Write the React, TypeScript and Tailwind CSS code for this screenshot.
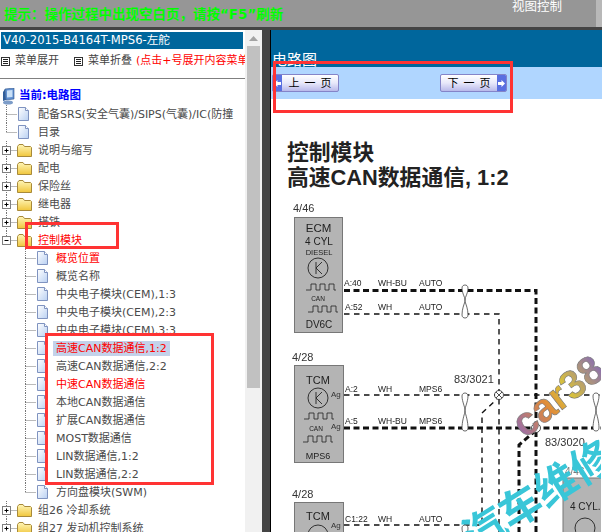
const FONT = "font-['DejaVu_Sans','Noto_Sans_CJK_SC',sans-serif]";

type Kind = "folder" | "doc";

interface TreeItem {
  label: string;
  red?: boolean;
  selected?: boolean;
}

const topBefore = ["说明与缩写", "配电", "保险丝", "继电器", "搭铁"];

const children: TreeItem[] = [
  { label: "概览位置", red: true },
  { label: "概览名称" },
  { label: "中央电子模块(CEM),1:3" },
  { label: "中央电子模块(CEM),2:3" },
  { label: "中央电子模块(CEM),3:3" },
  { label: "高速CAN数据通信,1:2", red: true, selected: true },
  { label: "高速CAN数据通信,2:2" },
  { label: "中速CAN数据通信", red: true },
  { label: "本地CAN数据通信" },
  { label: "扩展CAN数据通信" },
  { label: "MOST数据通信" },
  { label: "LIN数据通信,1:2" },
  { label: "LIN数据通信,2:2" },
  { label: "方向盘模块(SWM)" },
];

function DocIcon() {
  return (
    <svg width="13" height="16" viewBox="0 0 13 16" className="shrink-0">
      <defs>
        <linearGradient id="docFill" x1="0" y1="0" x2="1" y2="1">
          <stop offset="0%" stopColor="#ffffff" />
          <stop offset="100%" stopColor="#b9d0f2" />
        </linearGradient>
      </defs>
      <path d="M1.5 1.5H8.5L11.5 4.5V14.5H1.5Z" fill="url(#docFill)" stroke="#7f93c0" />
      <path d="M8.5 1.5V4.5H11.5" fill="#fff" stroke="#7f93c0" />
    </svg>
  );
}

function FolderIcon() {
  return (
    <svg width="15" height="14" viewBox="0 0 15 14" className="shrink-0">
      <defs>
        <linearGradient id="folderFill" x1="0" y1="0" x2="0" y2="1">
          <stop offset="0%" stopColor="#fff6b8" />
          <stop offset="100%" stopColor="#f0c63c" />
        </linearGradient>
      </defs>
      <path
        d="M0.5 3.5L2 1.5H6L7.5 3.5H13.5L14.5 4.5V13.5H0.5Z"
        fill="url(#folderFill)"
        stroke="#a88a3a"
      />
    </svg>
  );
}

// dotted tree guide with optional +/- box
function Guide({ box, up = true, down = true }: { box?: "+" | "-"; up?: boolean; down?: boolean }) {
  return (
    <svg width="17" height="18" viewBox="0 0 17 18" className="shrink-0">
      {up && <path d="M6.5 0V9" stroke="#777" strokeDasharray="1 1" />}
      {down && <path d="M6.5 9V18" stroke="#777" strokeDasharray="1 1" />}
      <path d="M6.5 9.5H17" stroke="#777" strokeDasharray="1 1" />
      {box && (
        <g>
          <rect x="2.5" y="5.5" width="8" height="8" fill="#fff" stroke="#808080" />
          <path d="M4.5 9.5H8.5" stroke="#000" />
          {box === "+" && <path d="M6.5 7.5V11.5" stroke="#000" />}
        </g>
      )}
    </svg>
  );
}

function TopRow({ label, kind, box, red, down = true }: { label: string; kind: Kind; box?: "+" | "-"; red?: boolean; down?: boolean }) {
  return (
    <div className="flex h-[18px] items-center whitespace-nowrap">
      <Guide box={box} down={down} />
      <span className="flex w-[21px] shrink-0">{kind === "folder" ? <FolderIcon /> : <DocIcon />}</span>
      <span className={`pt-px leading-[14px] ${red ? "text-[#ff0000]" : "text-[#4a4a4a]"}`}>{label}</span>
    </div>
  );
}

function ChildRow({ item, last }: { item: TreeItem; last: boolean }) {
  return (
    <div className="flex h-[18px] items-center whitespace-nowrap pl-[19px]">
      <Guide down={!last} />
      <span className="flex w-[17px] shrink-0">
        <DocIcon />
      </span>
      <span
        className={`px-[3px] pt-px leading-[14px] ${item.red ? "text-[#ff0000]" : "text-[#4a4a4a]"} ${item.selected ? "bg-[#c3d2ea]" : ""}`}
      >
        {item.label}
      </span>
    </div>
  );
}

function MenuIcon() {
  return (
    <svg width="9" height="9" viewBox="0 0 9 9" className="shrink-0">
      <rect x="0.5" y="0.5" width="8" height="8" fill="#fff" stroke="#333" />
      <path d="M2 2.5H7M2 4.5H7M2 6.5H7" stroke="#222" />
    </svg>
  );
}

function PcIcon() {
  return (
    <svg width="13" height="17" viewBox="0 0 13 17" className="shrink-0">
      <path d="M3 1L12 0V11L4 12Z" fill="#5f8fd0" stroke="#33558a" strokeWidth="0.6" />
      <path d="M5 2.5L10.5 2V9L5 9.6Z" fill="#c9e0f7" />
      <ellipse cx="6" cy="14.5" rx="5" ry="2" fill="#7c9cc8" />
      <path d="M1 4L3 1L4 12L1 13Z" fill="#2f5d9a" />
    </svg>
  );
}

function NavButton({ label, dir }: { label: string; dir: "prev" | "next" }) {
  const arrow = (
    <span className="flex h-full w-[9px] shrink-0 items-center justify-center bg-[#5a6fe0]">
      <svg width="7" height="7" viewBox="0 0 7 7">
        <path d={dir === "prev" ? "M0 3.5L3.5 0V2H7V5H3.5V7Z" : "M7 3.5L3.5 0V2H0V5H3.5V7Z"} fill="#fff" />
      </svg>
    </span>
  );
  return (
    <div className="flex h-[18px] w-[67px] items-center overflow-hidden rounded-[2px] border border-[#8484c8] bg-gradient-to-b from-[#ffffff] via-[#e8e8fa] to-[#b9b9ea]">
      {dir === "prev" && arrow}
      <span className="flex-1 pl-[5px] text-center text-[11px] leading-none tracking-[5px] whitespace-nowrap text-black">{label}</span>
      {dir === "next" && arrow}
    </div>
  );
}

function Wave({ x, y }: { x: number; y: number }) {
  return (
    <path
      d={`M${x} ${y}h5v-6h5v6h4v-6h5v6h4v-6h5v6h2`}
      fill="none"
      stroke="#222"
      strokeWidth="0.8"
    />
  );
}

function Transistor({ cx, cy }: { cx: number; cy: number }) {
  return (
    <g fill="none" stroke="#222" strokeWidth="0.9">
      <circle cx={cx} cy={cy} r="10" />
      <path d={`M${cx - 2} ${cy - 6}V${cy + 6}M${cx - 2} ${cy}L${cx + 4} ${cy - 6}M${cx - 2} ${cy}L${cx + 4} ${cy + 6}`} />
    </g>
  );
}

function Twist({ x, y1, y2 }: { x: number; y1: number; y2: number }) {
  const mid = (y1 + y2) / 2;
  return (
    <g fill="#fff" stroke="#444" strokeWidth="0.8">
      <path
        d={`M${x - 3} ${y1 + 3}C${x - 3} ${y1 - 1} ${x + 3} ${y1 - 1} ${x + 3} ${y1 + 3}C${x + 3} ${y1 + 9} ${x - 1} ${mid - 3} ${x} ${mid}C${x + 1} ${mid + 3} ${x + 3} ${y2 - 9} ${x + 3} ${y2 - 3}C${x + 3} ${y2 + 1} ${x - 3} ${y2 + 1} ${x - 3} ${y2 - 3}C${x - 3} ${y2 - 9} ${x - 1} ${mid + 3} ${x} ${mid}C${x + 1} ${mid - 3} ${x - 3} ${y1 + 9} ${x - 3} ${y1 + 3}Z`}
      />
    </g>
  );
}

function Diagram() {
  const label = "font-['Liberation_Sans',sans-serif]";
  const thick = { stroke: "#111", strokeWidth: 3, strokeDasharray: "6 3.5", fill: "none" };
  const thin = { stroke: "#111", strokeWidth: 1.4, strokeDasharray: "5.5 4.5", fill: "none" };
  return (
    <svg viewBox="272 190 330 342" width="330" height="342" className={`block blur-[0.3px] ${label}`}>
      <defs>
        <linearGradient id="carFill" x1="0" y1="0" x2="1" y2="0">
          <stop offset="0%" stopColor="#9a6ea8" />
          <stop offset="35%" stopColor="#e08a3a" />
          <stop offset="60%" stopColor="#d9c23a" />
          <stop offset="100%" stopColor="#8a6fb0" />
        </linearGradient>
      </defs>

      <text x="294" y="211" fontSize="11" fill="#333">4/46</text>
      <rect x="295.5" y="216.5" width="48" height="115" fill="#b4b4b4" stroke="#777" />
      <text x="319.5" y="231" fontSize="11.5" fill="#222" textAnchor="middle">ECM</text>
      <text x="320" y="244" fontSize="10" fill="#222" textAnchor="middle">4 CYL</text>
      <text x="320" y="254" fontSize="7.5" fill="#222" textAnchor="middle">DIESEL</text>
      <Transistor cx={319} cy={267} />
      <Wave x={307} y={289} />
      <text x="319" y="300" fontSize="6.5" fill="#222" textAnchor="middle">CAN</text>
      <Wave x={309} y={311} />
      <text x="320" y="327" fontSize="10" fill="#222" textAnchor="middle">DV6C</text>

      <text x="293" y="360" fontSize="11" fill="#333">4/28</text>
      <rect x="295.5" y="364.5" width="49" height="97" fill="#b4b4b4" stroke="#777" />
      <text x="319" y="383" fontSize="11" fill="#222" textAnchor="middle">TCM</text>
      <Transistor cx={319} cy={397} />
      <Wave x={305} y={418} />
      <text x="317" y="430" fontSize="6.5" fill="#222" textAnchor="middle">CAN</text>
      <Wave x={304} y={441} />
      <text x="319" y="458" fontSize="9" fill="#222" textAnchor="middle">MPS6</text>
      <text x="332" y="396" fontSize="8" fill="#333">Ag</text>
      <text x="332" y="428" fontSize="8" fill="#333">Ag</text>

      <text x="293" y="497" fontSize="11" fill="#333">4/28</text>
      <rect x="295.5" y="501.5" width="49" height="40" fill="#b4b4b4" stroke="#777" />
      <text x="319" y="519" fontSize="11" fill="#222" textAnchor="middle">TCM</text>
      <circle cx="319" cy="534" r="10" fill="none" stroke="#222" strokeWidth="0.9" />
      <text x="332" y="527" fontSize="8" fill="#333">Ag</text>

      <path d="M345 289.5H537V532" {...thick} />
      <path d="M345 313H500V532" {...thin} />
      <path d="M345 394H602" {...thin} />
      <path d="M345 427H602" {...thick} />
      <path d="M345 524H483V412L498 398" {...thin} />
      <path d="M520 532V444L535 431" {...thick} />

      <g fontSize="8.5" fill="#222">
        <text x="345" y="285">A:40</text>
        <text x="379" y="285">WH-BU</text>
        <text x="420" y="285">AUTO</text>
        <text x="346" y="309">A:52</text>
        <text x="379" y="309">WH</text>
        <text x="420" y="309">AUTO</text>
        <text x="346" y="391">A:2</text>
        <text x="379" y="391">WH</text>
        <text x="420" y="391">MPS6</text>
        <text x="346" y="423">A:5</text>
        <text x="379" y="423">WH-BU</text>
        <text x="420" y="423">MPS6</text>
        <text x="346" y="521">C1:22</text>
        <text x="379" y="521">WH</text>
        <text x="420" y="521">AUTO</text>
      </g>

      <Twist x={466} y1={284} y2={317} />
      <Twist x={466} y1={392} y2={430} />
      <Twist x={466} y1={524} y2={560} />
      <Twist x={597} y1={392} y2={430} />

      <circle cx="500" cy="394" r="4.5" fill="#fff" stroke="#222" strokeWidth="0.8" />
      <path d="M497 391L503 397M503 391L497 397" stroke="#222" strokeWidth="0.8" />
      <circle cx="537" cy="427" r="4.5" fill="#fff" stroke="#222" strokeWidth="0.8" />
      <text x="455" y="382" fontSize="11" fill="#333">83/3021</text>
      <text x="546" y="445" fontSize="11" fill="#333">83/3020</text>

      <rect x="564" y="477" width="48" height="70" fill="#b4b4b4" stroke="#777" />
      <text x="566" y="474" fontSize="10" fill="#777">4/46</text>
      <text x="571" y="509" fontSize="10" fill="#222">4 CYL.</text>
      <circle cx="586" cy="527" r="10" fill="none" stroke="#222" strokeWidth="0.9" />

      <text
        x="526"
        y="438"
        fontSize="40"
        fontWeight="700"
        fill="url(#carFill)"
        stroke="#777"
        strokeWidth="0.6"
        transform="rotate(-38 526 438)"
      >
        car38
      </text>
      <text
        x="476"
        y="552"
        fontSize="42"
        fontWeight="700"
        fill="#39c6d8"
        className="font-['Noto_Sans_CJK_SC',sans-serif]"
        transform="rotate(-32 476 552)"
      >
        汽车维修
      </text>
    </svg>
  );
}

export default function App() {
  return (
    <div className={`relative flex h-[532px] w-[602px] flex-col overflow-hidden bg-white text-[11px] ${FONT}`}>
      {/* top hint bar */}
      <div className="flex h-[27px] shrink-0 items-start bg-[#969696]">
        <div className="mt-[6px] ml-[4px] w-[282px] text-[13.5px] leading-[16px] font-bold whitespace-nowrap text-[#00ff00]">
          提示：操作过程中出现空白页，请按“F5”刷新
        </div>
        <div className="ml-[226px] text-[12.5px] leading-[13px] text-white">视图控制</div>
        <div className="ml-auto h-full w-[6px] bg-[#b8b8b8]" />
      </div>
      <div className="h-[3px] shrink-0 bg-[#444]" />

      <div className="flex min-h-0 flex-1">
        {/* left menu */}
        <div className="w-[245px] shrink-0 overflow-hidden">
          <div className="mt-[2px] ml-[1px] flex h-[17px] w-[242px] items-center bg-[#00669c] pl-[2px] text-[11.6px] whitespace-nowrap text-white">
            V40-2015-B4164T-MPS6-左舵
          </div>
          <div className="mt-[3px] flex h-[18px] items-center pl-[1px] whitespace-nowrap text-[#444]">
            <MenuIcon />
            <span className="ml-[5px]">菜单展开</span>
            <span className="ml-[15px]"><MenuIcon /></span>
            <span className="ml-[5px]">菜单折叠</span>
            <span className="ml-[4px] text-[#ff0000]">(点击+号展开内容菜单</span>
          </div>
          <div className="mt-[8px] h-px bg-[#808080]" />
          <div className="mt-[8px] flex h-[18px] items-center pl-[2px]">
            <PcIcon />
            <span className="ml-[4px] text-[11.5px] font-bold text-[#0000ff]">当前:电路图</span>
          </div>
          <TopRow label="配备SRS(安全气囊)/SIPS(气囊)/IC(防撞" kind="doc" />
          <TopRow label="目录" kind="doc" down={false} />
          {topBefore.map((label) => (
            <TopRow key={label} label={label} kind="folder" box="+" />
          ))}
          <TopRow label="控制模块" kind="folder" box="-" red down={false} />
          {children.map((item, i) => (
            <ChildRow key={item.label} item={item} last={i === children.length - 1} />
          ))}
          <TopRow label="组26 冷却系统" kind="folder" box="+" />
          <TopRow label="组27 发动机控制系统" kind="folder" box="+" />
        </div>

        {/* scrollbar */}
        <div className="flex w-[17px] shrink-0 flex-col items-center bg-[#f1f1f1] pt-[6px]">
          <svg width="9" height="5" viewBox="0 0 9 5" className="shrink-0">
            <path d="M4.5 0L9 5H0Z" fill="#a3a3a3" />
          </svg>
          <div className="mt-[5px] h-[342px] w-[13px] bg-[#c1c1c1]" />
        </div>

        {/* splitter */}
        <div className="w-[9px] shrink-0 border-r border-black bg-[#444]" />

        {/* right content */}
        <div className="min-w-0 flex-1 overflow-hidden">
          <div className="flex h-[37px] items-end bg-[#00669c] pl-px text-[15px] leading-[20px] text-white">
            <span className="-mb-[3px]">电路图</span>
          </div>
          <div className="flex h-[32px] items-center gap-[101px] bg-[#b0d6ff] pl-[1px]">
            <NavButton label="上一页" dir="prev" />
            <NavButton label="下一页" dir="next" />
          </div>
          <div className="mt-[41px] pl-[16px] font-['Liberation_Sans','Noto_Sans_CJK_SC',sans-serif] text-[21.8px] leading-[25px] font-bold text-[#222]">
            <div>控制模块</div>
            <div className="whitespace-nowrap">高速CAN数据通信, 1:2</div>
          </div>
          <div className="mt-[1px]">
            <Diagram />
          </div>
        </div>
      </div>

      {/* hand-drawn red annotation boxes */}
      <div className="absolute top-[222px] left-[25px] h-[27px] w-[94px] border-[3px] border-[#ff3333]" />
      <div className="absolute top-[333px] left-[45px] h-[152px] w-[169px] border-[3px] border-[#ff3333]" />
      <div className="absolute top-[61px] left-[273px] h-[52px] w-[240px] border-[3px] border-[#ff3333]" />
    </div>
  );
}
